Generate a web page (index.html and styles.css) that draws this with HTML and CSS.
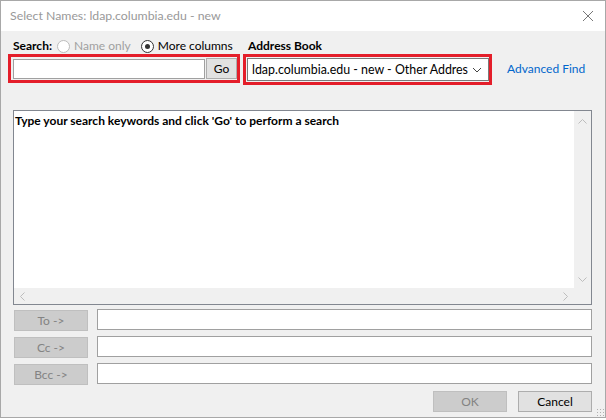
FILE: index.html
```html
<!DOCTYPE html>
<html lang="en">
<head>
    <meta charset="UTF-8">
    <title>Select Names</title>
    <link rel="stylesheet" href="styles.css">
</head>
<body>

<div class="window">
    <div class="titlebar">
        <span class="title">Select Names: ldap.columbia.edu - new</span>
        <svg class="close" width="12" height="12" viewBox="0 0 12 12">
            <path d="M1 1 L11 11 M11 1 L1 11" stroke="#777" stroke-width="1" fill="none"/>
        </svg>
    </div>

    <div class="content">
        <div class="top-row">
            <div class="search-group">
                <div class="labels">
                    <span class="label">Search:</span>
                    <span class="radio disabled"><span class="dot"></span>Name only</span>
                    <span class="radio checked"><span class="dot"></span>More columns</span>
                </div>
                <div class="highlight search-box">
                    <input type="text" class="search-input">
                    <button class="go-btn">Go</button>
                </div>
            </div>

            <div class="book-group">
                <div class="labels">
                    <span class="label">Address Book</span>
                </div>
                <div class="highlight book-box">
                    <div class="select">
                        <span class="select-text">ldap.columbia.edu - new - Other Address Book</span>
                        <svg width="10" height="6" viewBox="0 0 10 6">
                            <path d="M1 1 L5 5 L9 1" stroke="#444" stroke-width="1" fill="none"/>
                        </svg>
                    </div>
                </div>
            </div>

            <a class="advanced" href="#">Advanced Find</a>
        </div>

        <div class="results">
            <div class="results-body">
                <div class="results-text">Type your search keywords and click 'Go' to perform a search</div>
                <div class="vscroll">
                    <svg width="9" height="5" viewBox="0 0 9 5"><path d="M0.5 4.5 L4.5 0.5 L8.5 4.5" stroke="#bdbdbd" fill="none"/></svg>
                    <svg width="9" height="5" viewBox="0 0 9 5"><path d="M0.5 0.5 L4.5 4.5 L8.5 0.5" stroke="#bdbdbd" fill="none"/></svg>
                </div>
            </div>
            <div class="hscroll">
                <svg width="5" height="9" viewBox="0 0 5 9"><path d="M4.5 0.5 L0.5 4.5 L4.5 8.5" stroke="#bdbdbd" fill="none"/></svg>
                <svg width="5" height="9" viewBox="0 0 5 9"><path d="M0.5 0.5 L4.5 4.5 L0.5 8.5" stroke="#bdbdbd" fill="none"/></svg>
            </div>
        </div>

        <div class="recipients">
            <div class="recipient-row"><button class="field-btn">To -&gt;</button><div class="field"></div></div>
            <div class="recipient-row"><button class="field-btn">Cc -&gt;</button><div class="field"></div></div>
            <div class="recipient-row"><button class="field-btn">Bcc -&gt;</button><div class="field"></div></div>
        </div>

        <div class="actions">
            <button class="btn disabled">OK</button>
            <button class="btn">Cancel</button>
        </div>
    </div>
    <div class="grip"></div>
</div>

</body>
</html>
```

FILE: styles.css
```css
body {
    margin: 0;
    font-family: Lato, "Noto Sans", sans-serif;
    font-size: 12px;
    line-height: 16px;
    background-color: #ffffff;
}
.window {
    position: relative;
    width: 604px;
    height: 416px;
    border: 1px solid #a8a8a8;
    background-color: #f0f0f0;
    overflow: hidden;
}
.titlebar {
    height: 30px;
    background-color: #ffffff;
    display: flex;
    align-items: center;
    justify-content: space-between;
    padding: 0 11px 0 9px;
}
.title {
    color: #999999;
    font-size: 12.3px;
}
.content {
    padding: 7px 13px 0 7px;
}
.top-row {
    display: flex;
    align-items: flex-start;
    white-space: nowrap;
}
.labels {
    display: flex;
    align-items: center;
    height: 16px;
    padding-left: 5px;
}
.label {
    font-weight: bold;
    color: #000;
}
.radio {
    display: flex;
    align-items: center;
    color: #000;
}
.radio.disabled {
    color: #a0a0a0;
    margin-left: 5px;
}
.radio .dot {
    width: 13px;
    height: 13px;
    border: 1px solid #333;
    border-radius: 50%;
    margin-right: 4px;
    box-sizing: border-box;
    position: relative;
    background-color: #fff;
}
.radio.disabled .dot {
    border-color: #bcbcbc;
}
.radio.checked {
    margin-left: 10px;
}
.radio.checked .dot::after {
    content: "";
    position: absolute;
    left: 3px;
    top: 3px;
    width: 5px;
    height: 5px;
    border-radius: 50%;
    background-color: #333;
}
.highlight {
    border: 3px solid #e41e2a;
    display: flex;
    align-items: center;
    box-sizing: border-box;
}
.search-box {
    width: 232px;
    height: 29px;
    padding: 0 0 0 2px;
}
.search-input {
    width: 192px;
    height: 20px;
    box-sizing: border-box;
    border: 1px solid #a0a0a0;
    margin: 0;
    padding: 0;
    background: #fff;
}
.go-btn {
    width: 31px;
    height: 21px;
    margin-left: 1px;
    border: 1px solid #adadad;
    background-color: #e1e1e1;
    font-family: inherit;
    font-size: 12px;
    padding: 0;
    color: #000;
}
.book-group {
    margin-left: 3px;
}
.book-box {
    width: 249px;
    height: 31px;
    padding: 0 0 0 1px;
}
.select {
    width: 242px;
    height: 23px;
    box-sizing: border-box;
    border: 1px solid #7a7a7a;
    background-color: #fff;
    display: flex;
    align-items: center;
    padding: 0 6px 0 4px;
}
.select-text {
    flex: 1;
    white-space: nowrap;
    overflow: hidden;
    font-size: 12.4px;
}
.select svg {
    margin-left: 4px;
}
.advanced {
    color: #0066cc;
    text-decoration: none;
    margin: 23px 0 0 15px;
}
.results {
    margin-top: 25px;
    margin-left: 5px;
    width: 579px;
    height: 195px;
    box-sizing: border-box;
    border: 1px solid #828790;
    background-color: #f0f0f0;
    display: flex;
    flex-direction: column;
}
.results-body {
    flex: 1;
    display: flex;
}
.results-text {
    flex: 1;
    background-color: #fff;
    font-weight: bold;
    padding: 2px 1px;
    color: #000;
}
.vscroll {
    width: 17px;
    display: flex;
    flex-direction: column;
    justify-content: space-between;
    align-items: center;
    padding: 8px 0 6px;
}
.hscroll {
    height: 16px;
    display: flex;
    justify-content: space-between;
    align-items: center;
    padding: 0 23px 0 6px;
}
.recipients {
    margin-top: 4px;
    margin-left: 6px;
    display: flex;
    flex-direction: column;
    gap: 5px;
}
.recipient-row {
    display: flex;
    align-items: flex-start;
}
.field-btn {
    width: 74px;
    height: 21px;
    margin: 1px 9px 0 0;
    border: 1px solid #bfbfbf;
    background-color: #cccccc;
    color: #838383;
    font-family: inherit;
    font-size: 12px;
    padding: 0;
}
.field {
    width: 496px;
    height: 21px;
    box-sizing: border-box;
    border: 1px solid #a0a0a0;
    background-color: #fff;
}
.actions {
    display: flex;
    justify-content: flex-end;
    gap: 11px;
    margin-top: 6px;
    padding-right: 0;
}
.btn {
    width: 74px;
    height: 21px;
    border: 1px solid #adadad;
    background-color: #e1e1e1;
    font-family: inherit;
    font-size: 12px;
    padding: 0;
    color: #000;
}
.btn.disabled {
    background-color: #cccccc;
    border-color: #bfbfbf;
    color: #838383;
}
.grip {
    position: absolute;
    right: 0;
    bottom: 0;
    width: 9px;
    height: 9px;
    background-image: radial-gradient(circle, #b0b0b0 0.8px, transparent 1px);
    background-size: 3px 3px;
}
```
